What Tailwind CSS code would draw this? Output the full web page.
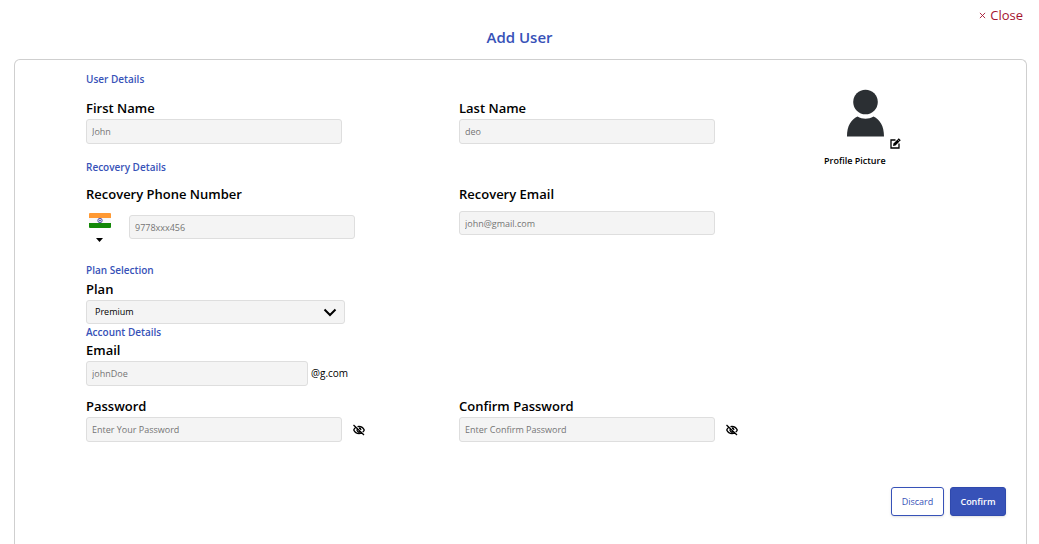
<!DOCTYPE html>
<html lang="en">
<head>
  <meta charset="UTF-8" />
  <meta name="viewport" content="width=device-width, initial-scale=1.0" />
  <title>Add User</title>
  <script src="https://cdn.jsdelivr.net/npm/@tailwindcss/browser@4"></script>
</head>
<body class="min-h-screen flex flex-col bg-white text-black font-['Open_Sans',sans-serif]">
  <header class="px-4 pt-[5px]">
    <div class="flex justify-end">
      <button type="button" class="text-[13px] leading-5 text-[#a5122f] flex items-center gap-1">
        <svg class="w-[7px] h-[7px]" viewBox="0 0 8 8" fill="none" stroke="currentColor" stroke-width="1"><path d="M1 1l6 6M7 1L1 7" /></svg>
        Close
      </button>
    </div>
    <h1 class="text-center text-[15px] leading-6 font-semibold text-[#3752b8]">Add User</h1>
  </header>

  <main class="flex-1 mx-3.5 mr-3 mt-2.5 border border-b-0 border-[#cfcfcf] rounded-t-md pl-[71px] pr-5 pt-[11px]">
    <form>
      <div class="flex">
        <div class="flex-1">
          <!-- User details -->
          <h2 class="text-[10px] leading-4 font-semibold text-[#3752b8]">User Details</h2>
          <div class="grid grid-cols-2 mt-[11px]">
            <div>
              <label for="first" class="block text-[13px] leading-5 font-semibold">First Name</label>
              <input id="first" type="text" placeholder="John" class="block mt-px w-64 h-[25px] px-[5px] text-[9px] bg-[#f4f4f4] border border-[#dedede] rounded-[3px] placeholder:text-[#757575]" />
            </div>
            <div>
              <label for="last" class="block text-[13px] leading-5 font-semibold">Last Name</label>
              <input id="last" type="text" placeholder="deo" class="block mt-px w-64 h-[25px] px-[5px] text-[9px] bg-[#f4f4f4] border border-[#dedede] rounded-[3px] placeholder:text-[#757575]" />
            </div>
          </div>

          <!-- Recovery details -->
          <h2 class="mt-[15px] text-[10px] leading-4 font-semibold text-[#3752b8]">Recovery Details</h2>
          <div class="grid grid-cols-2 mt-[9px]">
            <div>
              <label for="phone" class="block text-[13px] leading-5 font-semibold">Recovery Phone Number</label>
              <div class="flex items-start mt-2">
                <button type="button" aria-label="Country code" class="w-[27px] flex flex-col items-center">
                  <svg class="w-[22px] h-[17px]" viewBox="0 0 22 17">
                    <rect y="1" width="22" height="15" rx="1" fill="#f8f8f8" />
                    <path d="M1 1h20a1 1 0 0 1 1 1v4H0V2a1 1 0 0 1 1-1z" fill="#ff9933" />
                    <path d="M0 11h22v4a1 1 0 0 1-1 1H1a1 1 0 0 1-1-1z" fill="#138808" />
                    <circle cx="11" cy="8.5" r="2.2" fill="#dcdcf2" stroke="#4a4a9c" stroke-width=".9" />
                    <circle cx="11" cy="8.5" r=".8" fill="#33338c" />
                  </svg>
                  <svg class="mt-[9px] w-[7px] h-1" viewBox="0 0 7 4"><path d="M0 0h7L3.500 4z" /></svg>
                </button>
                <input id="phone" type="tel" placeholder="9778xxx456" class="mt-[3px] ml-4 w-[226px] h-6 px-[5px] text-[9px] bg-[#f4f4f4] border border-[#dedede] rounded-[3px] placeholder:text-[#757575]" />
              </div>
            </div>
            <div>
              <label for="recovery" class="block text-[13px] leading-5 font-semibold">Recovery Email</label>
              <input id="recovery" type="email" placeholder="john@gmail.com" class="block mt-[7px] w-64 h-6 px-[5px] text-[9px] bg-[#f4f4f4] border border-[#dedede] rounded-[3px] placeholder:text-[#757575]" />
            </div>
          </div>

          <!-- Plan -->
          <h2 class="mt-5 text-[10px] leading-4 font-semibold text-[#3752b8]">Plan Selection</h2>
          <label for="plan" class="block mt-px text-[13px] leading-5 font-semibold">Plan</label>
          <div class="relative mt-px w-[259px]">
            <select id="plan" class="appearance-none block w-full h-6 pl-2 text-[9px] bg-[#f4f4f4] border border-[#dedede] rounded-[3px]">
              <option>Premium</option>
              <option>Basic</option>
            </select>
            <svg class="absolute right-2 top-2 w-3.5 h-[9px] pointer-events-none" viewBox="0 0 14 9" fill="none" stroke="currentColor" stroke-width="2"><path d="M1.500 1.500L7 7l5.500-5.500" /></svg>
          </div>

          <!-- Account details -->
          <h2 class="text-[10px] leading-4 font-semibold text-[#3752b8]">Account Details</h2>
          <label for="email" class="block text-[13px] leading-5 font-semibold">Email</label>
          <div class="mt-px flex items-center gap-[3px]">
            <input id="email" type="text" placeholder="johnDoe" class="w-[222px] h-[25px] px-[5px] text-[9px] bg-[#f4f4f4] border border-[#dedede] rounded-[3px] placeholder:text-[#757575]" />
            <span class="text-[10px]">@g.com</span>
          </div>
          <div class="grid grid-cols-2 mt-2.5">
            <div>
              <label for="password" class="block text-[13px] leading-5 font-semibold">Password</label>
              <div class="mt-px flex items-center gap-[11px]">
                <input id="password" type="password" placeholder="Enter Your Password" class="w-64 h-[25px] px-[5px] text-[9px] bg-[#f4f4f4] border border-[#dedede] rounded-[3px] placeholder:text-[#757575]" />
                <button type="button" aria-label="Show password">
                  <svg class="w-3 h-3" viewBox="0 0 24 24" fill="none" stroke="currentColor" stroke-width="2.600"><path d="M6 6.500C3.500 8 2 10.500 1.500 12c2 4.500 6 7 10.500 7 2 0 4-.5 5.500-1.500M9 5.300C10 5 11 5 12 5c4.500 0 8.500 2.500 10.500 7-.5 1.300-1.500 2.700-3 4M8.500 10a4 4 0 0 0 6 5M12 8.500a4 4 0 0 1 4 3.500M1 2l21 20" /></svg>
                </button>
              </div>
            </div>
            <div>
              <label for="confirm" class="block text-[13px] leading-5 font-semibold">Confirm Password</label>
              <div class="mt-px flex items-center gap-[11px]">
                <input id="confirm" type="password" placeholder="Enter Confirm Password" class="w-64 h-[25px] px-[5px] text-[9px] bg-[#f4f4f4] border border-[#dedede] rounded-[3px] placeholder:text-[#757575]" />
                <button type="button" aria-label="Show confirm password">
                  <svg class="w-3 h-3" viewBox="0 0 24 24" fill="none" stroke="currentColor" stroke-width="2.600"><path d="M6 6.500C3.500 8 2 10.500 1.500 12c2 4.500 6 7 10.500 7 2 0 4-.5 5.500-1.500M9 5.300C10 5 11 5 12 5c4.500 0 8.500 2.500 10.500 7-.5 1.300-1.500 2.700-3 4M8.500 10a4 4 0 0 0 6 5M12 8.500a4 4 0 0 1 4 3.500M1 2l21 20" /></svg>
                </button>
              </div>
            </div>
          </div>
        </div>

        <!-- Profile picture -->
        <aside class="w-[174px] pt-[18px]">
          <div class="flex items-end pl-3.5">
            <svg class="mb-3 w-[39px] h-[48px]" viewBox="0 0 39 48" fill="#2b2f33">
              <circle cx="19.500" cy="13" r="12.300" />
              <path d="M1 47.500C1 37 5 30.500 11.500 27.500c5 3 11 3 16 0C34 30.500 38 37 38 47.500z" />
            </svg>
            <button type="button" aria-label="Edit picture" class="ml-[5px]">
              <svg class="w-[11px] h-[11px]" viewBox="0 0 22 22">
                <path d="M11 4H2v16h16v-9" fill="none" stroke="currentColor" stroke-width="2.600" />
                <path d="M17.500 .5l4 4L11 15l-5 1 1-5z" />
                <path d="M15 3l4 4" stroke="#fff" stroke-width="1" />
              </svg>
            </button>
          </div>
          <p class="mt-1 -ml-2 text-[9px] leading-4 font-semibold">Profile Picture</p>
        </aside>
      </div>

      <div class="flex justify-end gap-1.5 mt-[45px]">
        <button type="button" class="h-[29px] w-[53px] text-[9px] text-[#3752b8] bg-white border border-[#3752b8] rounded-[3px] shadow-sm">Discard</button>
        <button type="submit" class="h-[29px] w-14 text-[9px] font-semibold text-white bg-[#3752b8] border border-[#2f49ad] rounded-[3px] shadow-sm">Confirm</button>
      </div>
    </form>
  </main>
</body>
</html>
